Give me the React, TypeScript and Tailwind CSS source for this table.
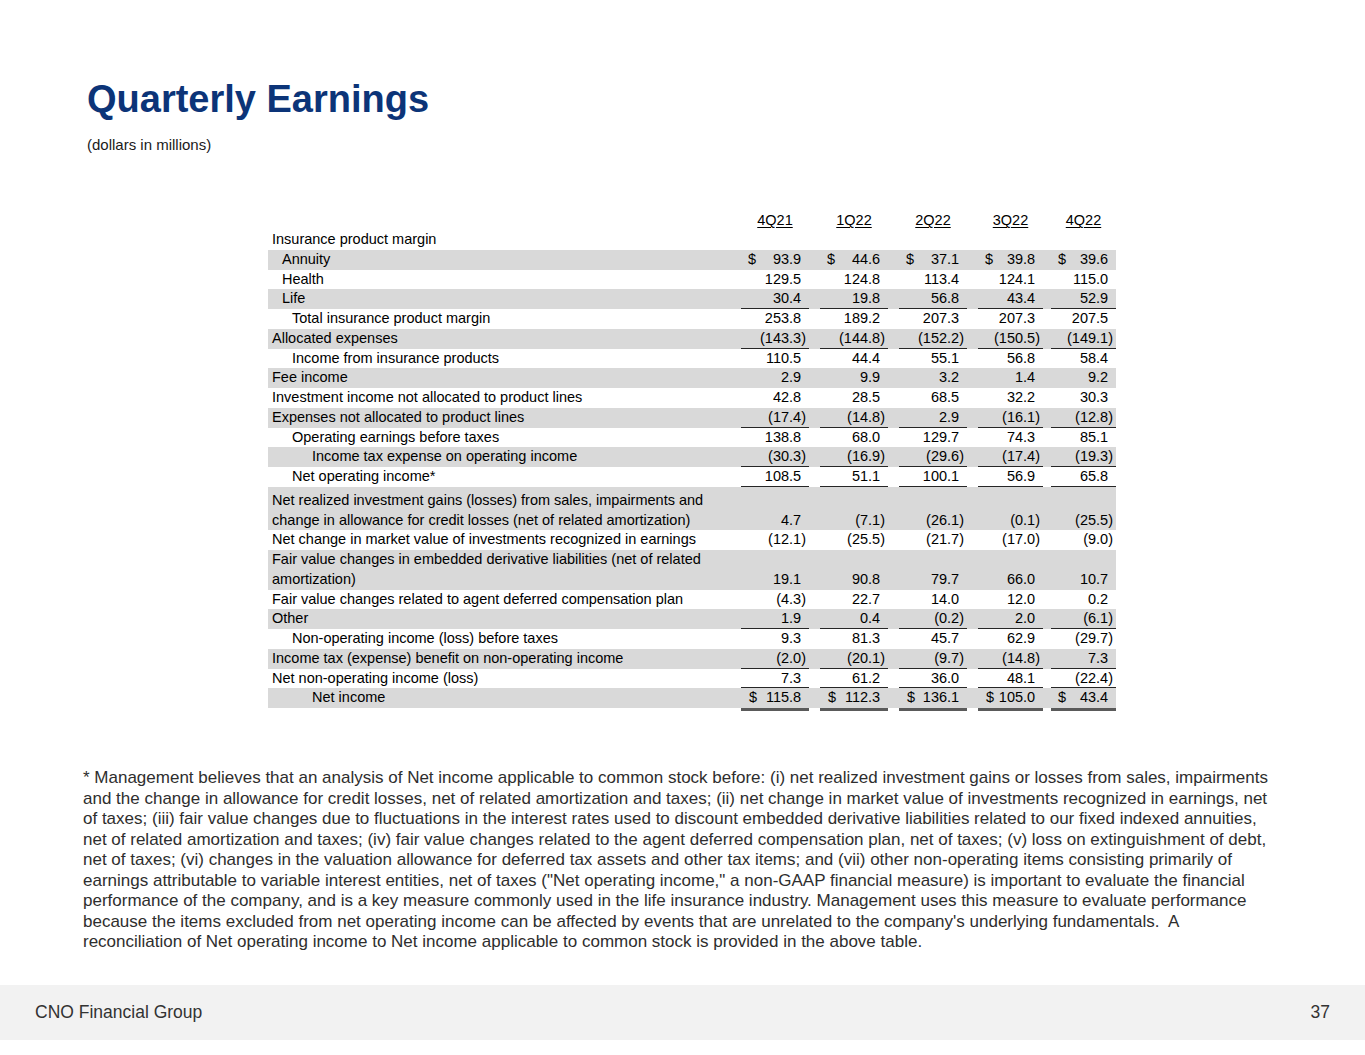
const FONT = { fontFamily: '"Liberation Sans", Arial, sans-serif' };

type Row = {
  label: string[];
  indent: number;
  gray: boolean;
  vals: string[];
  line?: "single" | "double";
  tall?: boolean;
};

const rows: Row[] = [
  { label: ["Insurance product margin"], indent: 0, gray: false, vals: [] },
  { label: ["Annuity"], indent: 1, gray: true, vals: ["$93.9", "$44.6", "$37.1", "$39.8", "$39.6"] },
  { label: ["Health"], indent: 1, gray: false, vals: ["129.5", "124.8", "113.4", "124.1", "115.0"] },
  { label: ["Life"], indent: 1, gray: true, vals: ["30.4", "19.8", "56.8", "43.4", "52.9"], line: "single" },
  { label: ["Total insurance product margin"], indent: 2, gray: false, vals: ["253.8", "189.2", "207.3", "207.3", "207.5"] },
  { label: ["Allocated expenses"], indent: 0, gray: true, vals: ["(143.3)", "(144.8)", "(152.2)", "(150.5)", "(149.1)"], line: "single" },
  { label: ["Income from insurance products"], indent: 2, gray: false, vals: ["110.5", "44.4", "55.1", "56.8", "58.4"] },
  { label: ["Fee income"], indent: 0, gray: true, vals: ["2.9", "9.9", "3.2", "1.4", "9.2"] },
  { label: ["Investment income not allocated to product lines"], indent: 0, gray: false, vals: ["42.8", "28.5", "68.5", "32.2", "30.3"] },
  { label: ["Expenses not allocated to product lines"], indent: 0, gray: true, vals: ["(17.4)", "(14.8)", "2.9", "(16.1)", "(12.8)"], line: "single" },
  { label: ["Operating earnings before taxes"], indent: 2, gray: false, vals: ["138.8", "68.0", "129.7", "74.3", "85.1"] },
  { label: ["Income tax expense on operating income"], indent: 3, gray: true, vals: ["(30.3)", "(16.9)", "(29.6)", "(17.4)", "(19.3)"], line: "single" },
  { label: ["Net operating income*"], indent: 2, gray: false, vals: ["108.5", "51.1", "100.1", "56.9", "65.8"], line: "single" },
  {
    label: [
      "Net realized investment gains (losses) from sales, impairments and",
      "change in allowance for credit losses (net of related amortization)",
    ],
    indent: 0,
    gray: true,
    vals: ["4.7", "(7.1)", "(26.1)", "(0.1)", "(25.5)"],
    tall: true,
  },
  { label: ["Net change in market value of investments recognized in earnings"], indent: 0, gray: false, vals: ["(12.1)", "(25.5)", "(21.7)", "(17.0)", "(9.0)"] },
  {
    label: ["Fair value changes in embedded derivative liabilities (net of related", "amortization)"],
    indent: 0,
    gray: true,
    vals: ["19.1", "90.8", "79.7", "66.0", "10.7"],
  },
  { label: ["Fair value changes related to agent deferred compensation plan"], indent: 0, gray: false, vals: ["(4.3)", "22.7", "14.0", "12.0", "0.2"] },
  { label: ["Other"], indent: 0, gray: true, vals: ["1.9", "0.4", "(0.2)", "2.0", "(6.1)"], line: "single" },
  { label: ["Non-operating income (loss) before taxes"], indent: 2, gray: false, vals: ["9.3", "81.3", "45.7", "62.9", "(29.7)"] },
  { label: ["Income tax (expense) benefit on non-operating income"], indent: 0, gray: true, vals: ["(2.0)", "(20.1)", "(9.7)", "(14.8)", "7.3"], line: "single" },
  { label: ["Net non-operating income (loss)"], indent: 0, gray: false, vals: ["7.3", "61.2", "36.0", "48.1", "(22.4)"], line: "single" },
  { label: ["Net income"], indent: 3, gray: true, vals: ["$$115.8", "$$112.3", "$$136.1", "$$105.0", "$43.4"], line: "double" },
];

const indentCls = ["pl-[4px]", "pl-[14px]", "pl-[24px]", "pl-[44px]"];

// number columns: width + left gap
const cols = [
  "w-[68px]",
  "ml-[11px] w-[68px]",
  "ml-[11px] w-[68px]",
  "ml-[11px] w-[65px]",
  "ml-[8px] w-[65px]",
];

function parse(s: string) {
  let dollar = false;
  let tight = false;
  if (s.startsWith("$$")) {
    dollar = true;
    tight = true;
    s = s.slice(2);
  } else if (s.startsWith("$")) {
    dollar = true;
    s = s.slice(1);
  }
  const neg = s.startsWith("(");
  if (neg) s = s.slice(1, -1);
  return { v: s, neg, dollar, tight };
}

function NumCell({ raw, line, cls }: { raw?: string; line?: Row["line"]; cls: string }) {
  const p = raw ? parse(raw) : null;
  return (
    <div
      className={`${cls} flex items-end justify-between pr-[3px] leading-[19.75px] ${
        line === "single" ? "shadow-[inset_0_-1px_0_#262626]" : ""
      } ${line === "double" ? "shadow-[0_3px_0_#5a5a5a]" : ""}`}
    >
      <span className={p?.tight ? "pl-[8px]" : "pl-[7px]"}>{p?.dollar ? "$" : ""}</span>
      {p && (
        <span className="whitespace-pre">
          {p.neg ? "(" : ""}
          {p.v}
          <span className={p.neg ? "" : "invisible"}>)</span>
        </span>
      )}
    </div>
  );
}

function TableRow({ r }: { r: Row }) {
  const h = r.tall ? "h-[43.5px]" : r.label.length > 1 ? "h-[39.5px]" : "h-[19.75px]";
  return (
    <div className={`flex ${h} ${r.gray ? "bg-[#d9d9d9]" : ""}`}>
      <div className={`w-[473px] ${indentCls[r.indent]} flex flex-col justify-end leading-[19.75px]`}>
        {r.label.map((l) => (
          <div key={l} className="whitespace-nowrap">
            {l}
          </div>
        ))}
      </div>
      {cols.map((c, i) => (
        <NumCell key={i} raw={r.vals[i]} line={r.line} cls={c} />
      ))}
    </div>
  );
}

const footnote = [
  "* Management believes that an analysis of Net income applicable to common stock before: (i) net realized investment gains or losses from sales, impairments",
  "and the change in allowance for credit losses, net of related amortization and taxes; (ii) net change in market value of investments recognized in earnings, net",
  "of taxes; (iii) fair value changes due to fluctuations in the interest rates used to discount embedded derivative liabilities related to our fixed indexed annuities,",
  "net of related amortization and taxes; (iv) fair value changes related to the agent deferred compensation plan, net of taxes; (v) loss on extinguishment of debt,",
  "net of taxes; (vi) changes in the valuation allowance for deferred tax assets and other tax items; and (vii) other non-operating items consisting primarily of",
  'earnings attributable to variable interest entities, net of taxes ("Net operating income," a non-GAAP financial measure) is important to evaluate the financial',
  "performance of the company, and is a key measure commonly used in the life insurance industry. Management uses this measure to evaluate performance",
  "because the items excluded from net operating income can be affected by events that are unrelated to the company's underlying fundamentals.  A",
  "reconciliation of Net operating income to Net income applicable to common stock is provided in the above table.",
];

export default function App() {
  return (
    <div className="w-[1365px] h-[1055px] bg-white flex flex-col text-black" style={FONT}>
      {/* Title */}
      <div className="pl-[87px] pt-[80px]">
        <h1 className="text-[38px] leading-[38px] font-bold text-[#0c3478]">Quarterly Earnings</h1>
        <p className="mt-[18px] text-[15px] leading-[18px] text-[#1a1a1a]">(dollars in millions)</p>
      </div>

      {/* Table */}
      <div className="ml-[268px] mt-[56px] w-[848px] text-[14.5px]">
        <div className="flex h-[20px] items-end">
          <div className="w-[473px]" />
          {["4Q21", "1Q22", "2Q22", "3Q22", "4Q22"].map((h, i) => (
            <div key={h} className={`${cols[i]} text-center leading-[20px]`}>
              <span className="underline underline-offset-[2px] decoration-1">{h}</span>
            </div>
          ))}
        </div>
        {rows.map((r, i) => (
          <TableRow key={i} r={r} />
        ))}
      </div>

      {/* Footnote */}
      <div className="ml-[83px] mt-[60px] text-[17px] leading-[20.5px] text-[#2e2e2e]">
        {footnote.map((l, i) => (
          <div key={i} className="whitespace-pre">
            {l}
          </div>
        ))}
      </div>

      {/* Footer */}
      <div className="mt-auto mb-[15px] h-[55px] bg-[#f2f2f2] flex items-center justify-between px-[35px] text-[17.5px] text-[#333333]">
        <span>CNO Financial Group</span>
        <span>37</span>
      </div>
    </div>
  );
}
